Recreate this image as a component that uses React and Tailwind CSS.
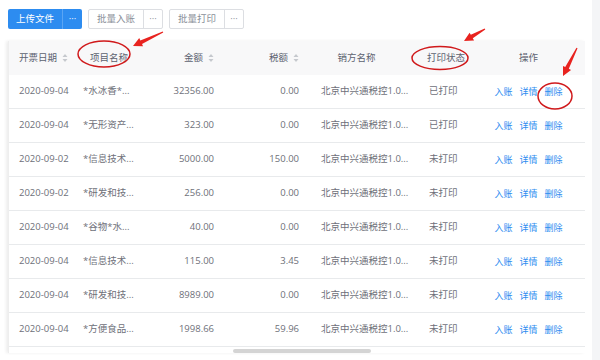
import React from 'react';

const rows = [
  { date: '2020-09-04', name: '*水冰香*...', amount: '32356.00', tax: '0.00', status: '已打印' },
  { date: '2020-09-04', name: '*无形资产...', amount: '323.00', tax: '0.00', status: '已打印' },
  { date: '2020-09-02', name: '*信息技术...', amount: '5000.00', tax: '150.00', status: '未打印' },
  { date: '2020-09-02', name: '*研发和技...', amount: '256.00', tax: '0.00', status: '未打印' },
  { date: '2020-09-04', name: '*谷物*水...', amount: '40.00', tax: '0.00', status: '未打印' },
  { date: '2020-09-04', name: '*信息技术...', amount: '115.00', tax: '3.45', status: '未打印' },
  { date: '2020-09-04', name: '*研发和技...', amount: '8989.00', tax: '0.00', status: '未打印' },
  { date: '2020-09-04', name: '*方便食品...', amount: '1998.66', tax: '59.96', status: '未打印' },
];

const cols = 'grid grid-cols-[66px_76px_72px_85px_103px_70px_95px_10px]';

const SortIcon = () => (
  <svg width="6" height="10" viewBox="0 0 6 10" className="ml-[5px] shrink-0">
    <path d="M3 1 L5.5 4 L0.5 4 Z" fill="#c5c8ce" />
    <path d="M3 9 L5.5 6 L0.5 6 Z" fill="#c5c8ce" />
  </svg>
);

// tapered red arrow from (x1,y1) to tip (x2,y2)
const arrowPoints = (x1, y1, x2, y2) => {
  const dx = x2 - x1;
  const dy = y2 - y1;
  const len = Math.hypot(dx, dy);
  const ux = dx / len;
  const uy = dy / len;
  const nx = -uy;
  const ny = ux;
  const head = 9;
  const bx = x2 - ux * head;
  const by = y2 - uy * head;
  const pts = [
    [x1 + nx * 0.6, y1 + ny * 0.6],
    [bx + nx * 2, by + ny * 2],
    [bx + nx * 4.5, by + ny * 4.5],
    [x2, y2],
    [bx - nx * 4.5, by - ny * 4.5],
    [bx - nx * 2, by - ny * 2],
    [x1 - nx * 0.6, y1 - ny * 0.6],
  ];
  return pts.map((p) => p.join(',')).join(' ');
};

const Annotations = () => (
  <svg width="600" height="360" className="absolute left-0 top-0 pointer-events-none">
    <ellipse cx="104" cy="54" rx="26" ry="13" fill="none" stroke="#d0191b" strokeWidth="1.5" />
    <polygon points={arrowPoints(163, 32, 133, 46)} fill="#e8231f" />
    <ellipse cx="440" cy="58" rx="28" ry="11.5" fill="none" stroke="#d0191b" strokeWidth="1.5" />
    <polygon points={arrowPoints(485, 29, 464, 41)} fill="#e8231f" />
    <ellipse cx="555" cy="96" rx="17" ry="13" fill="none" stroke="#d0191b" strokeWidth="1.5" />
    <polygon points={arrowPoints(577, 48, 563, 76)} fill="#e8231f" />
  </svg>
);

const App = () => {
  return (
    <div className="relative flex w-[600px] h-[360px] overflow-hidden bg-white font-['Open_Sans','Noto_Sans_CJK_SC',sans-serif] text-[9.5px]">
      <div className="flex-1 pl-[8px] pt-[9px]">
        {/* toolbar */}
        <div className="flex items-center h-[20px]">
          <div className="flex h-[20px] rounded-[2px] overflow-hidden bg-[#2d8cf0] text-white">
            <span className="w-[54px] flex items-center justify-center">上传文件</span>
            <span className="w-[20px] flex items-center justify-center border-l border-[#5aa5f4]">···</span>
          </div>
          <div className="ml-[6px] flex h-[20px] rounded-[2px] border border-[#dcdee2] text-[#8a8f99]">
            <span className="w-[54px] flex items-center justify-center">批量入账</span>
            <span className="w-[19px] flex items-center justify-center border-l border-[#dcdee2]">···</span>
          </div>
          <div className="ml-[6px] flex h-[20px] rounded-[2px] border border-[#dcdee2] text-[#8a8f99]">
            <span className="w-[54px] flex items-center justify-center">批量打印</span>
            <span className="w-[19px] flex items-center justify-center border-l border-[#dcdee2]">···</span>
          </div>
        </div>

        {/* table */}
        <div className="mt-[12px] w-[577px] shadow-[-2px_0_3px_rgba(0,0,0,0.07)] border-l border-[#eeeeee]">
          <div className={`${cols} h-[34px] bg-[#f8f8f9] text-[#5c6270] items-center`}>
            <div className="flex items-center pl-[10px]">开票日期<SortIcon /></div>
            <div className="pl-[15px]">项目名称</div>
            <div className="flex items-center justify-end pr-[9px]">金额<SortIcon /></div>
            <div className="flex items-center justify-end pr-[9px]">税额<SortIcon /></div>
            <div className="text-center pr-[6px]">销方名称</div>
            <div className="text-center">打印状态</div>
            <div className="text-center">操作</div>
            <div />
          </div>
          {rows.map((r, i) => (
            <div key={i} className={`${cols} h-[34px] items-center border-b border-[#e8eaec] text-[#6e7079]`}>
              <div className="pl-[10px]">{r.date}</div>
              <div className="pl-[8px] whitespace-nowrap">{r.name}</div>
              <div className="text-right pr-[9px]">{r.amount}</div>
              <div className="text-right pr-[9px]">{r.tax}</div>
              <div className="pl-[13px] whitespace-nowrap">北京中兴通税控1.0...</div>
              <div className="pl-[18px]">{r.status}</div>
              <div className="flex justify-center gap-[7px] text-[9px] text-[#2d8cf0]">
                <span>入账</span>
                <span>详情</span>
                <span>删除</span>
              </div>
              <div />
            </div>
          ))}
          <div className="relative h-[6px]">
            <div className="absolute left-[224px] top-[2px] w-[138px] h-[4px] rounded-full bg-[#d4d4d4]" />
          </div>
        </div>
      </div>
      <div className="w-[8px] h-[360px] bg-[#f4f5f7]" />
      <Annotations />
    </div>
  );
};

export default App;
